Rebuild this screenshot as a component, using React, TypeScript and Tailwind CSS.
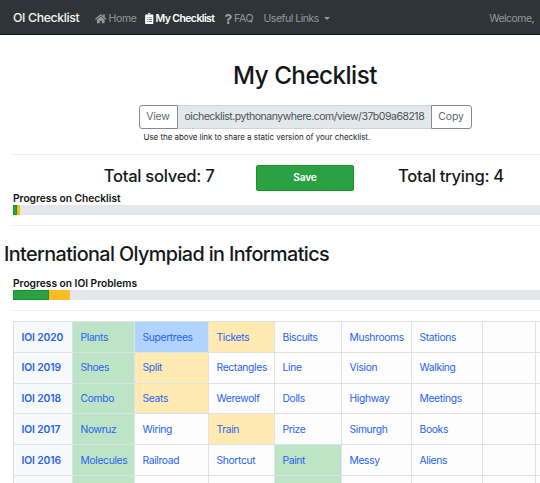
import { FaClipboardList, FaHome, FaQuestion } from "react-icons/fa";

type Status = "" | "solved" | "partial" | "trying";
type Problem = [name: string, status?: Status];

const rows: { year: string; problems: Problem[] }[] = [
  { year: "IOI 2020", problems: [["Plants", "solved"], ["Supertrees", "trying"], ["Tickets", "partial"], ["Biscuits"], ["Mushrooms"], ["Stations"], [""], [""]] },
  { year: "IOI 2019", problems: [["Shoes", "solved"], ["Split", "partial"], ["Rectangles"], ["Line"], ["Vision"], ["Walking"], [""], [""]] },
  { year: "IOI 2018", problems: [["Combo", "solved"], ["Seats", "partial"], ["Werewolf"], ["Dolls"], ["Highway"], ["Meetings"], [""], [""]] },
  { year: "IOI 2017", problems: [["Nowruz", "solved"], ["Wiring"], ["Train", "partial"], ["Prize"], ["Simurgh"], ["Books"], [""], [""]] },
  { year: "IOI 2016", problems: [["Molecules", "solved"], ["Railroad"], ["Shortcut"], ["Paint", "solved"], ["Messy"], ["Aliens"], [""], [""]] },
  { year: "", problems: [["", "solved"], [""], [""], ["", "solved"], [""], [""], [""], [""]] },
];

const fills: Record<Status, string> = {
  "": "bg-[#fdfdfe]",
  solved: "bg-[#bde4c6]",
  partial: "bg-[#ffebb2]",
  trying: "bg-[#b1d3ff]",
};

function Navbar() {
  return (
    <nav className="flex h-[35px] items-center border-b border-[#10131f] bg-[#2f3438] pt-[3px] pl-[13px] text-[10.5px] tracking-[-0.35px] whitespace-nowrap text-[#96999b]">
      <span className="w-[82px] text-[12.3px] font-medium tracking-[-0.36px] text-[#f5f5f5]">OI Checklist</span>
      <span className="flex w-[50px] items-center gap-[2px]">
        <FaHome className="size-[11.5px]" />
        Home
      </span>
      <span className="flex w-[79px] items-center gap-[2px] font-semibold tracking-[-0.6px] text-white">
        <FaClipboardList className="h-[11px] w-[8.5px]" />
        My Checklist
      </span>
      <span className="flex w-[39.5px] items-center gap-[1.5px]">
        <FaQuestion className="h-[10px] w-[8.5px]" />
        FAQ
      </span>
      <span className="flex items-center gap-[5px] tracking-[-0.47px]">
        Useful Links
        <i className="mt-[-1px] border-x-[3px] border-t-[3px] border-x-transparent border-t-current" />
      </span>
      <span className="ml-auto pr-[6px] tracking-[-0.55px]">Welcome,</span>
    </nav>
  );
}

function ShareLink() {
  return (
    <div className="mx-auto w-[333px]">
      <div className="flex h-[24px] text-[10.5px] tracking-[-0.2px] whitespace-nowrap text-[#62696f]">
        <button className="w-[39px] rounded-l-[3px] border border-[#858b91] bg-white">View</button>
        <div className="flex flex-1 items-center border-y border-[#ced4da] bg-[#e4e8eb] pl-[7px] tracking-[-0.48px] text-[#495057]">
          oichecklist.pythonanywhere.com/view/37b09a68218
        </div>
        <button className="w-[41px] rounded-r-[3px] border border-[#858b91] bg-white">Copy</button>
      </div>
      <p className="pt-[2px] pl-[5px] text-[8px] leading-[12px] tracking-[-0.04px] text-[#212529]">
        Use the above link to share a static version of your checklist.
      </p>
    </div>
  );
}

function Progress({ label, solved, trying }: { label: string; solved: number; trying: number }) {
  return (
    <div className="text-[10.2px] leading-[13px] font-semibold text-[#111]">
      {label}
      <div className="flex h-[10px] bg-[#e4e8eb]">
        <div className="border border-[#159522] bg-[#2ba144]" style={{ width: solved }} />
        <div className="bg-[#fdbb23]" style={{ width: trying }} />
      </div>
    </div>
  );
}

function ProblemTable() {
  return (
    <table className="w-[584px] table-fixed border-collapse text-[10.3px] tracking-[-0.34px] whitespace-nowrap text-[#2563f5]">
      <colgroup>
        <col className="w-[59px]" />
        <col className="w-[62px]" />
        <col className="w-[74px]" />
        <col className="w-[66px]" />
        <col className="w-[67px]" />
        <col className="w-[70px]" />
        <col className="w-[71px]" />
        <col className="w-[53px]" />
        <col className="w-[62px]" />
      </colgroup>
      <tbody>
        {rows.map((row, i) => (
          <tr key={i} className="h-[30.8px]">
            <th className="border border-[#dee2e6] bg-[#f8f9fb] p-0 pt-px pl-[7.5px] text-left font-semibold tracking-[-0.12px]">{row.year}</th>
            {row.problems.map(([name, status = ""], j) => (
              <td key={j} className={`border border-[#dee2e6] p-0 pt-px pl-[7.5px] ${fills[status]}`}>
                {name}
              </td>
            ))}
          </tr>
        ))}
      </tbody>
    </table>
  );
}

export default function App() {
  return (
    <div className="h-[483px] w-[540px] overflow-hidden bg-white font-['Inter','Liberation_Sans',sans-serif] text-[#15181b]">
      <Navbar />
      <main className="w-[610px] px-[13px] pt-[25px]">
        <h1 className="h-[45px] text-center text-[24.2px] leading-[31px] font-medium tracking-[-0.52px]">My Checklist</h1>
        <ShareLink />
        <hr className="mt-[11px] mb-[10px] border-[#eaebec]" />
        <div className="flex h-[27px] justify-center text-center whitespace-nowrap">
          <h2 className="w-[146px] text-[16.6px] leading-[22px] font-medium tracking-[-0.27px]">Total solved: 7</h2>
          <div className="w-[146px]">
            <button className="mx-auto block h-[26px] w-[98px] rounded-[2px] border border-[#159522] bg-[#2ba144] text-[10.2px] font-semibold tracking-[-0.2px] text-white">
              Save
            </button>
          </div>
          <h2 className="w-[146px] text-[16.6px] leading-[22px] font-medium tracking-[-0.27px]">Total trying: 4</h2>
        </div>
        <Progress label="Progress on Checklist" solved={4} trying={3} />
        <hr className="mt-[10px] mb-[15px] border-[#eaebec]" />
        <h2 className="-ml-[9px] h-[36px] text-[19.8px] leading-[26px] font-medium tracking-[-0.61px]">International Olympiad in Informatics</h2>
        <Progress label="Progress on IOI Problems" solved={36} trying={21} />
        <hr className="mt-[10px] mb-[10px] border-[#eaebec]" />
        <ProblemTable />
      </main>
    </div>
  );
}
